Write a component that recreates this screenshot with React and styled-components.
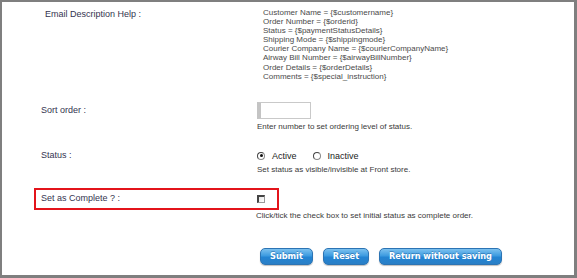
import React from "react";
import styled, { createGlobalStyle } from "styled-components";

const Global = createGlobalStyle`
  html, body { margin: 0; padding: 0; background: #fff; }
`;

const Frame = styled.div`
  width: 577px;
  height: 278px;
  box-sizing: border-box;
  border-style: solid;
  border-color: #7f7f7f;
  border-width: 2px 3px 3px 2px;
  background: #fff;
  font-family: "Liberation Sans", Arial, sans-serif;
  display: flex;
  flex-direction: column;
`;

const Row = styled.div`
  margin-top: ${(p) => p.$top}px;
  padding-left: 32px;
`;

const Line = styled.div`
  display: grid;
  grid-template-columns: 221px auto;
  align-items: ${(p) => (p.$start ? "start" : "center")};
  box-sizing: border-box;
  border: 2px solid ${(p) => (p.$highlight ? "#e3141b" : "transparent")};
  width: ${(p) => (p.$highlight ? "245px" : "auto")};
  min-height: ${(p) => p.$h || 0}px;
`;

const Label = styled.div`
  padding-left: ${(p) => p.$indent || 5}px;
  padding-top: ${(p) => p.$top || 0}px;
  font-size: 9px;
  line-height: 9px;
  color: #34344f;
`;

const HelpList = styled.div`
  padding-left: 6px;
  font-size: 8px;
  line-height: 9.1px;
  color: #4a4a4a;
`;

const Hint = styled.div`
  margin-left: ${(p) => p.$left || 223}px;
  margin-top: ${(p) => p.$top}px;
  font-size: 8px;
  line-height: 10px;
  color: #3a3a3a;
`;

const TextBox = styled.div`
  width: 54px;
  height: 17px;
  box-sizing: border-box;
  border: 1px solid #c9c9c9;
  border-left: 4px solid #c4c4c4;
  background: #fff;
`;

const RadioGroup = styled.div`
  display: flex;
  align-items: center;
  font-size: 9px;
  color: #222;
`;

const RadioItem = styled.span`
  display: flex;
  align-items: center;
  gap: 7px;
  margin-right: 16px;
`;

const Radio = styled.span`
  width: 8px;
  height: 8px;
  box-sizing: border-box;
  border-radius: 50%;
  border: 1px solid #8a8a8a;
  border-top-color: #444;
  border-left-color: #444;
  background: #fff;
  display: flex;
  align-items: center;
  justify-content: center;
  &::after {
    content: "";
    width: 3px;
    height: 3px;
    border-radius: 50%;
    background: ${(p) => (p.$checked ? "#111" : "transparent")};
  }
`;

const Check = styled.span`
  width: 8px;
  height: 8px;
  box-sizing: border-box;
  border: 1px solid #9a9a9a;
  border-top: 2px solid #444;
  border-left: 2px solid #444;
  background: linear-gradient(135deg, #e6e6e6, #fff);
`;

const Buttons = styled.div`
  margin-top: 27px;
  padding-left: 258px;
  display: flex;
  gap: 10px;
`;

const Button = styled.button`
  height: 17px;
  padding: 0 9px;
  box-sizing: border-box;
  border: 1px solid #2c74b4;
  border-radius: 5px;
  background: linear-gradient(to bottom, #7cc1ef 0%, #3d9be0 45%, #2384d3 55%, #2a7fc6 100%);
  box-shadow: 0 1px 1px rgba(0, 0, 0, 0.25);
  color: #fff;
  font-family: "DejaVu Sans", Verdana, sans-serif;
  font-weight: bold;
  font-size: 8.2px;
  line-height: 15px;
  text-shadow: 0 -1px 0 rgba(0, 50, 110, 0.35);
  cursor: pointer;
`;

const helpLines = [
  "Customer Name = {$customername}",
  "Order Number = {$orderid}",
  "Status = {$paymentStatusDetails}",
  "Shipping Mode = {$shippingmode}",
  "Courier Company Name = {$courierCompanyName}",
  "Airway Bill Number = {$airwayBillNumber}",
  "Order Details = {$orderDetails}",
  "Comments = {$special_instruction}",
];

export default function App() {
  return (
    <>
      <Global />
      <Frame>
        <Row $top={4}>
          <Line $start>
            <Label $indent={9} $top={2}>Email Description Help :</Label>
            <HelpList>
              {helpLines.map((l) => (
                <div key={l}>{l}</div>
              ))}
            </HelpList>
          </Line>
        </Row>

        <Row $top={17}>
          <Line $h={21}>
            <Label>Sort order :</Label>
            <TextBox />
          </Line>
          <Hint $top={1}>Enter number to set ordering level of status.</Hint>
        </Row>

        <Row $top={16}>
          <Line $h={16}>
            <Label>Status :</Label>
            <RadioGroup>
              <RadioItem>
                <Radio $checked /> Active
              </RadioItem>
              <RadioItem>
                <Radio /> Inactive
              </RadioItem>
            </RadioGroup>
          </Line>
          <Hint $top={1}>Set status as visible/invisible at Front store.</Hint>
        </Row>

        <Row $top={13}>
          <Line $highlight $h={22}>
            <Label>Set as Complete ? :</Label>
            <Check />
          </Line>
          <Hint $top={1} $left={222}>Click/tick the check box to set initial status as complete order.</Hint>
        </Row>

        <Buttons>
          <Button>Submit</Button>
          <Button>Reset</Button>
          <Button>Return without saving</Button>
        </Buttons>
      </Frame>
    </>
  );
}
